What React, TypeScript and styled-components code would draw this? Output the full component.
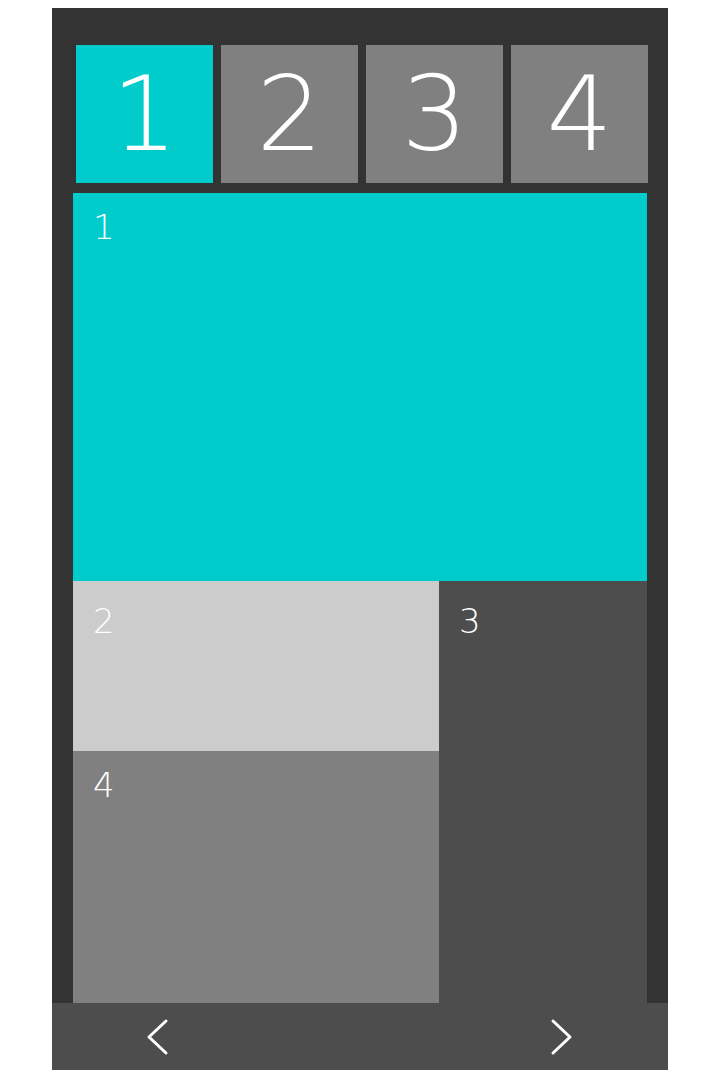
import styled, { createGlobalStyle } from "styled-components";

const GlobalStyle = createGlobalStyle`
  body {
    margin: 0;
    background: #ffffff;
    font-family: "DejaVu Sans", "Noto Sans", sans-serif;
  }
`;

const tabs = [1, 2, 3, 4];

export default function App() {
  return (
    <>
      <GlobalStyle />
      <Frame>
        <Header>
          {tabs.map((n) => (
            <Tab key={n} $active={n === 1}>
              {n}
            </Tab>
          ))}
        </Header>
        <Body>
          <Hero>
            <Label>1</Label>
          </Hero>
          <Tiles>
            <Tile $bg="#cccccc" $area="a">
              <Label $top={20}>2</Label>
            </Tile>
            <Tile $bg="#4d4d4d" $area="b">
              <Label $top={20}>3</Label>
            </Tile>
            <Tile $bg="#808080" $area="c">
              <Label>4</Label>
            </Tile>
          </Tiles>
        </Body>
        <Footer>
          <NavButton aria-label="previous">
            <svg width="26" height="38" viewBox="0 0 26 38">
              <path d="M22 3 L5 19 L22 35" fill="none" stroke="#fff" strokeWidth="3" strokeLinecap="round" strokeLinejoin="round" />
            </svg>
          </NavButton>
          <NavButton aria-label="next">
            <svg width="26" height="38" viewBox="0 0 26 38">
              <path d="M4 3 L21 19 L4 35" fill="none" stroke="#fff" strokeWidth="3" strokeLinecap="round" strokeLinejoin="round" />
            </svg>
          </NavButton>
        </Footer>
      </Frame>
    </>
  );
}

const Frame = styled.div`
  width: 616px;
  margin: 8px 0 0 52px;
  height: 1062px;
  background: #333333;
  display: flex;
  flex-direction: column;
`;

const Header = styled.div`
  display: grid;
  grid-template-columns: repeat(4, 137px);
  column-gap: 8px;
  padding: 37px 21px 10px 24px;
`;

const Tab = styled.div<{ $active?: boolean }>`
  height: 138px;
  background: ${(p) => (p.$active ? "#00cccc" : "#808080")};
  color: #ffffff;
  font-size: 104px;
  font-weight: 200;
  line-height: 138px;
  text-align: center;
`;

const Body = styled.div`
  flex: 1;
  display: flex;
  flex-direction: column;
  padding: 0 21px;
`;

const Hero = styled.div`
  height: 388px;
  background: #00cccc;
`;

const Tiles = styled.div`
  flex: 1;
  display: grid;
  grid-template-columns: 366px 208px;
  grid-template-rows: 170px 1fr;
  grid-template-areas:
    "a b"
    "c b";
`;

const Tile = styled.div<{ $bg: string; $area: string }>`
  background: ${(p) => p.$bg};
  grid-area: ${(p) => p.$area};
`;

const Label = styled.div<{ $top?: number }>`
  color: #ffffff;
  font-size: 34px;
  font-weight: 200;
  line-height: 40px;
  padding: ${(p) => p.$top ?? 14}px 0 0 20px;
`;

const Footer = styled.div`
  height: 67px;
  background: #4d4d4d;
  display: flex;
  align-items: center;
  justify-content: space-between;
  padding: 0 93px 0 92px;
`;

const NavButton = styled.button`
  background: none;
  border: none;
  padding: 0;
  display: flex;
  cursor: pointer;
`;
